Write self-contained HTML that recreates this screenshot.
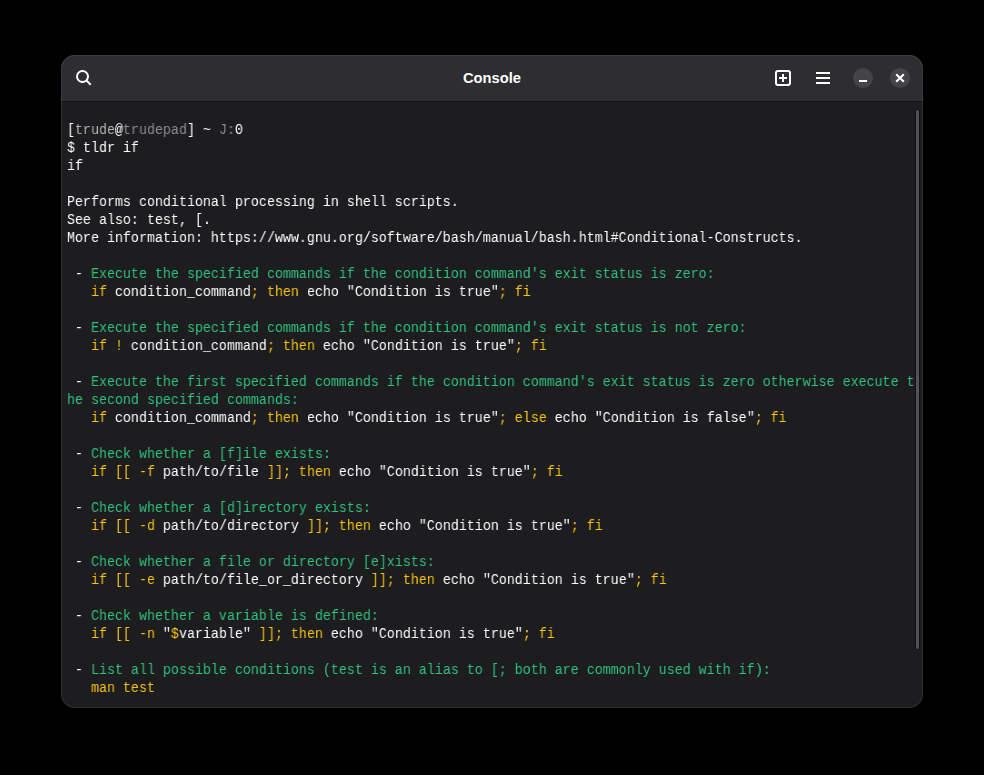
<!DOCTYPE html>
<html><head><meta charset="utf-8">
<style>
html,body{margin:0;padding:0;background:#000;width:984px;height:775px;overflow:hidden;}
#win{position:absolute;left:61px;top:55px;width:862px;height:653px;border-radius:14px;background:#303033;}
#hdrb{position:absolute;left:0;top:0;width:862px;height:46px;background:#3c3c40;border-radius:14px 14px 0 0;}
#hdr{position:absolute;left:1px;top:1px;width:860px;height:45px;background:#2e2e32;border-radius:13px 13px 0 0;}
#body{position:absolute;left:1px;top:46px;width:860px;height:606px;background:#1d1d20;border-radius:0 0 13px 13px;overflow:hidden;}
#hdrline{position:absolute;left:0;top:0;width:860px;height:4px;background:linear-gradient(#141416 0,#141416 1px,#1b1b1e 1px,#1b1b1e 2px,#1d1d20 2px);}
#title{position:absolute;left:1px;top:1px;width:860px;height:45px;font:bold 14.7px/45px "Liberation Sans",sans-serif;text-align:center;color:#fff;}
.ic{position:absolute;}
#term{position:absolute;left:5.3px;top:20px;margin:0;font:14.667px/18px "Liberation Mono",monospace;transform:scaleX(0.90909);transform-origin:0 0;will-change:transform;color:#ffffff;white-space:pre;}
.g{color:#2ec27e}
.y{color:#f5c211}
.u{color:#b5b4b2}
.d{color:#8c8b8f}
.l{color:#9a9996}
#sb{position:absolute;left:854px;top:9px;width:3px;height:539px;background:#525255;border-radius:2px;box-shadow:0 0 0 1px #121214;}
</style></head><body>
<div id="win">
  <div id="hdrb"></div>
  <div id="hdr"></div>
  <div id="title">Console</div>
  <svg class="ic" style="left:0;top:0" width="862" height="46" viewBox="61 55 862 46">
    <circle cx="82.5" cy="76.5" r="5.5" fill="none" stroke="#fff" stroke-width="2"/>
    <path d="M86.3 80.3 L90.7 84.7" stroke="#fff" stroke-width="2"/>
    <rect x="776" y="71" width="14" height="14" rx="2" fill="none" stroke="#fff" stroke-width="2"/>
    <rect x="779" y="77" width="8" height="2" fill="#fff"/>
    <rect x="782" y="74" width="2" height="8" fill="#fff"/>
    <rect x="816" y="72" width="14" height="2" fill="#fff"/>
    <rect x="816" y="77" width="14" height="2" fill="#fff"/>
    <rect x="816" y="82" width="14" height="2" fill="#fff"/>
    <circle cx="863" cy="78" r="10" fill="#444448"/>
    <rect x="859" y="80" width="8" height="2" fill="#fff"/>
    <circle cx="900" cy="78" r="10" fill="#444448"/>
    <path d="M896.2 74.2 L903.8 81.8 M903.8 74.2 L896.2 81.8" stroke="#fff" stroke-width="2.1"/>
  </svg>
<div id="body"><div id="hdrline"></div>
<pre id="term">[<span class="u">trude</span>@<span class="d">trudepad</span>] ~ <span class="d">J:</span>0
$ tldr if
if

Performs conditional processing in shell scripts.
See also: test, [.
More information: https://www.gnu.org/software/bash/manual/bash.html#Conditional-Constructs.

 - <span class="g">Execute the specified commands if the condition command's exit status is zero:</span>
   <span class="y">if</span> condition_command<span class="y">; then</span> echo "Condition is true"<span class="y">; fi</span>

 - <span class="g">Execute the specified commands if the condition command's exit status is not zero:</span>
   <span class="y">if !</span> condition_command<span class="y">; then</span> echo "Condition is true"<span class="y">; fi</span>

 - <span class="g">Execute the first specified commands if the condition command's exit status is zero otherwise execute t
he second specified commands:</span>
   <span class="y">if</span> condition_command<span class="y">; then</span> echo "Condition is true"<span class="y">; else</span> echo "Condition is false"<span class="y">; fi</span>

 - <span class="g">Check whether a [f]ile exists:</span>
   <span class="y">if [[ -f</span> path/to/file <span class="y">]]; then</span> echo "Condition is true"<span class="y">; fi</span>

 - <span class="g">Check whether a [d]irectory exists:</span>
   <span class="y">if [[ -d</span> path/to/directory <span class="y">]]; then</span> echo "Condition is true"<span class="y">; fi</span>

 - <span class="g">Check whether a file or directory [e]xists:</span>
   <span class="y">if [[ -e</span> path/to/file_or_directory <span class="y">]]; then</span> echo "Condition is true"<span class="y">; fi</span>

 - <span class="g">Check whether a variable is defined:</span>
   <span class="y">if [[ -n</span> "<span class="y">$</span>variable" <span class="y">]]; then</span> echo "Condition is true"<span class="y">; fi</span>

 - <span class="g">List all possible conditions (test is an alias to [; both are commonly used with if):</span>
   <span class="y">man test</span>
</pre>
  <div id="sb"></div></div>
</div>
</body></html>
